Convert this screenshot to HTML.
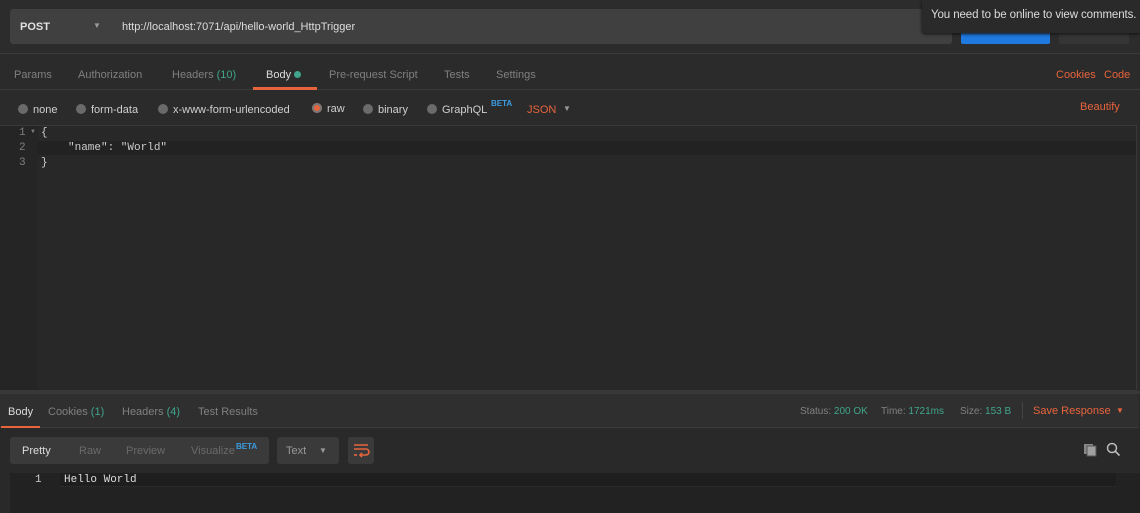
<!DOCTYPE html>
<html><head><style>
*{margin:0;padding:0;box-sizing:border-box}
body{width:1140px;height:513px;overflow:hidden;background:#2b2b2b;font-family:"Liberation Sans",sans-serif;font-size:11px;color:#cfcfcf;position:relative}
.a{position:absolute;white-space:nowrap}
.g{color:#808080}.t{color:#3fa58c}.o{color:#e8643c}
.dot{display:inline-block;width:10px;height:10px;border-radius:50%;background:#6a6a6a;vertical-align:-1px;margin-right:5px}
.mono{font-family:"Liberation Mono",monospace;font-size:11px}
</style></head><body>
<div class="a" style="left:0;top:0;width:1140px;height:53px;background:#2c2c2c"></div>
<div class="a" style="left:10px;top:9px;width:942px;height:35px;background:#404040;border-radius:3px"></div>
<div class="a" style="left:20px;top:21px;font-weight:bold;color:#e0e0e0">POST</div>
<div class="a" style="left:93px;top:21px;color:#999;font-size:8px">▼</div>
<div class="a" style="left:122px;top:21px;color:#ddd">http://localhost:7071/api/hello-world_HttpTrigger</div>
<div class="a" style="left:961px;top:30px;width:89px;height:14px;background:#1f7ae0;border-radius:2px"></div>
<div class="a" style="left:1059px;top:30px;width:70px;height:14px;background:#353535;border-radius:2px"></div>
<div class="a" style="left:922px;top:0;width:218px;height:33px;background:#2a2a2a;border-radius:0 0 0 3px;box-shadow:0 1px 3px #111"></div>
<div class="a" style="left:931px;top:9px;color:#ddd;font-size:11.5px;letter-spacing:-0.1px">You need to be online to view comments.</div>
<div class="a" style="left:0;top:53px;width:1140px;height:1px;background:#3a3a3a"></div>
<div class="a" style="left:0;top:89px;width:1140px;height:1px;background:#3a3a3a"></div>
<div class="a g" style="left:14px;top:69px">Params</div>
<div class="a g" style="left:78px;top:69px">Authorization</div>
<div class="a g" style="left:172px;top:69px">Headers <span class="t">(10)</span></div>
<div class="a" style="left:266px;top:69px;color:#ddd">Body <span style="display:inline-block;width:7px;height:7px;border-radius:50%;background:#3fa58c"></span></div>
<div class="a" style="left:253px;top:87px;width:64px;height:3px;background:#e8643c"></div>
<div class="a g" style="left:329px;top:69px">Pre-request Script</div>
<div class="a g" style="left:444px;top:69px">Tests</div>
<div class="a g" style="left:496px;top:69px">Settings</div>
<div class="a o" style="left:1056px;top:69px">Cookies</div>
<div class="a o" style="left:1104px;top:69px">Code</div>
<div class="a" style="left:18px;top:104px"><span class="dot"></span>none</div>
<div class="a" style="left:76px;top:104px"><span class="dot"></span>form-data</div>
<div class="a" style="left:158px;top:104px"><span class="dot"></span>x-www-form-urlencoded</div>
<div class="a" style="left:312px;top:103px"><span class="dot" style="background:#e8643c;box-shadow:0 0 0 2px #777 inset"></span>raw</div>
<div class="a" style="left:363px;top:104px"><span class="dot"></span>binary</div>
<div class="a" style="left:427px;top:104px"><span class="dot"></span>GraphQL</div>
<div class="a" style="left:491px;top:99px;color:#3c9ce0;font-size:8px;font-weight:bold">BETA</div>
<div class="a o" style="left:527px;top:104px">JSON</div>
<div class="a" style="left:563px;top:104px;color:#999;font-size:8px">▼</div>
<div class="a o" style="left:1080px;top:101px">Beautify</div>
<div class="a" style="left:0;top:125px;width:1137px;height:266px;background:#282828;border:1px solid #383838"></div>
<div class="a" style="left:0;top:126px;width:38px;height:264px;background:#252525"></div>
<div class="a" style="left:38px;top:141px;width:1098px;height:14px;background:#222"></div>
<div class="a mono g" style="left:19px;top:127px">1</div><div class="a g" style="left:30px;top:129px;font-size:6px">▼</div>
<div class="a mono g" style="left:19px;top:142px">2</div>
<div class="a mono g" style="left:19px;top:157px">3</div>
<div class="a mono" style="left:41px;top:127px">{</div>
<div class="a mono" style="left:68px;top:142px;color:#ccc">"name": "World"</div>
<div class="a mono" style="left:41px;top:157px">}</div>
<div class="a" style="left:0;top:391px;width:1140px;height:3px;background:#383838"></div>
<div class="a" style="left:0;top:394px;width:1138px;height:34px;background:#2f2f2f;border-bottom:1px solid #3a3a3a"></div>
<div class="a" style="left:8px;top:406px;color:#ddd">Body</div>
<div class="a" style="left:1px;top:426px;width:39px;height:2px;background:#e8643c"></div>
<div class="a g" style="left:48px;top:406px">Cookies <span class="t">(1)</span></div>
<div class="a g" style="left:122px;top:406px">Headers <span class="t">(4)</span></div>
<div class="a g" style="left:198px;top:406px">Test Results</div>
<div class="a" style="left:800px;top:406px;font-size:10px"><span class="g">Status:</span> <span class="t">200 OK</span></div>
<div class="a" style="left:881px;top:406px;font-size:10px"><span class="g">Time:</span> <span class="t">1721ms</span></div>
<div class="a" style="left:960px;top:406px;font-size:10px"><span class="g">Size:</span> <span class="t">153 B</span></div>
<div class="a" style="left:1022px;top:402px;width:1px;height:17px;background:#444"></div>
<div class="a o" style="left:1033px;top:405px">Save Response</div>
<div class="a o" style="left:1116px;top:406px;font-size:8px">▼</div>
<div class="a" style="left:0;top:429px;width:1140px;height:84px;background:#292929"></div>
<div class="a" style="left:10px;top:437px;width:259px;height:27px;background:#3a3a3a;border-radius:3px"></div>
<div class="a" style="left:22px;top:445px;color:#ddd">Pretty</div>
<div class="a" style="left:79px;top:445px;color:#6a6a6a">Raw</div>
<div class="a" style="left:126px;top:445px;color:#6a6a6a">Preview</div>
<div class="a" style="left:191px;top:445px;color:#6a6a6a">Visualize</div>
<div class="a" style="left:236px;top:442px;color:#3c9ce0;font-size:8px;font-weight:bold">BETA</div>
<div class="a" style="left:277px;top:437px;width:62px;height:27px;background:#3a3a3a;border-radius:3px"></div>
<div class="a" style="left:286px;top:445px;color:#999">Text</div>
<div class="a" style="left:319px;top:446px;color:#999;font-size:8px">▼</div>
<div class="a" style="left:348px;top:437px;width:26px;height:27px;background:#3a3a3a;border-radius:3px"></div>
<svg class="a" style="left:352px;top:443px" width="18" height="16" viewBox="0 0 18 16"><g stroke="#e8643c" stroke-width="1.6" fill="none"><path d="M2 2H16M2 6H14a3 3 0 0 1 0 6H8"/><path d="M10 10L8 12L10 14"/><path d="M2 12H5"/></g></svg>
<svg class="a" style="left:1083px;top:443px" width="15" height="14" viewBox="0 0 15 14"><rect x="1" y="1" width="9" height="10" fill="#888"/><rect x="4" y="3" width="9" height="10" fill="#a0a0a0" stroke="#555"/></svg>
<svg class="a" style="left:1106px;top:442px" width="15" height="15" viewBox="0 0 15 15"><circle cx="6" cy="6" r="4.5" stroke="#bbb" stroke-width="1.5" fill="none"/><path d="M9.5 9.5L13.5 13.5" stroke="#bbb" stroke-width="1.6"/></svg>
<div class="a" style="left:10px;top:473px;width:1130px;height:40px;background:#222"></div>
<div class="a" style="left:60px;top:473px;width:1056px;height:14px;background:#1e1e1e;border-bottom:1px dotted #333"></div>
<div class="a mono" style="left:35px;top:474px;color:#ccc">1</div>
<div class="a mono" style="left:64px;top:474px;color:#ddd">Hello World</div>
</body></html>
